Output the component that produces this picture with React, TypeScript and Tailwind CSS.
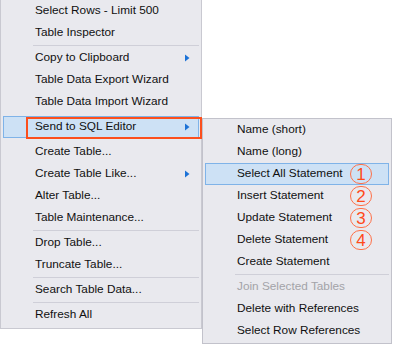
const FONT = { fontFamily: '"Liberation Sans", Arial, sans-serif' };

type Item =
  | { kind: 'sep'; hidden?: boolean }
  | { kind: 'item'; label: string; arrow?: boolean; active?: boolean; disabled?: boolean; mark?: string };

const mainItems: Item[] = [
  { kind: 'item', label: 'Select Rows - Limit 500' },
  { kind: 'item', label: 'Table Inspector' },
  { kind: 'sep' },
  { kind: 'item', label: 'Copy to Clipboard', arrow: true },
  { kind: 'item', label: 'Table Data Export Wizard' },
  { kind: 'item', label: 'Table Data Import Wizard' },
  { kind: 'sep', hidden: true },
  { kind: 'item', label: 'Send to SQL Editor', arrow: true, active: true },
  { kind: 'sep', hidden: true },
  { kind: 'item', label: 'Create Table...' },
  { kind: 'item', label: 'Create Table Like...', arrow: true },
  { kind: 'item', label: 'Alter Table...' },
  { kind: 'item', label: 'Table Maintenance...' },
  { kind: 'sep' },
  { kind: 'item', label: 'Drop Table...' },
  { kind: 'item', label: 'Truncate Table...' },
  { kind: 'sep' },
  { kind: 'item', label: 'Search Table Data...' },
  { kind: 'sep' },
  { kind: 'item', label: 'Refresh All' },
];

const subItems: Item[] = [
  { kind: 'item', label: 'Name (short)' },
  { kind: 'item', label: 'Name (long)' },
  { kind: 'item', label: 'Select All Statement', active: true, mark: '1' },
  { kind: 'item', label: 'Insert Statement', mark: '2' },
  { kind: 'item', label: 'Update Statement', mark: '3' },
  { kind: 'item', label: 'Delete Statement', mark: '4' },
  { kind: 'item', label: 'Create Statement' },
  { kind: 'sep' },
  { kind: 'item', label: 'Join Selected Tables', disabled: true },
  { kind: 'item', label: 'Delete with References' },
  { kind: 'item', label: 'Select Row References' },
];

function Arrow() {
  return (
    <svg width="5" height="8" viewBox="0 0 5 8" className="ml-auto mr-[8px]">
      <path d="M0 0.5 L4.5 4 L0 7.5 Z" fill="#1c72d6" />
    </svg>
  );
}

function MenuRows({ items }: { items: Item[] }) {
  return (
    <>
      {items.map((it, i) =>
        it.kind === 'sep' ? (
          <div key={i} className="h-[3px] flex items-center ml-[32px] mr-[2px]">
            {!it.hidden && <div className="h-px w-full bg-[#cfcfd8]" />}
          </div>
        ) : (
          <div
            key={i}
            className={
              'h-[22px] mx-[2px] pl-[31px] flex items-center border ' +
              (it.active ? 'border-[#7fb3e8] bg-[#cde1f5]' : 'border-transparent')
            }
          >
            <span className={it.disabled ? 'text-[#a3a3a8]' : 'text-[#101010]'}>{it.label}</span>
            {it.arrow && <Arrow />}
            {it.mark && (
              <span className="ml-auto mr-[16px] w-[22px] h-[20px] rounded-full border border-[#ff7048] flex items-center justify-center text-[#ff4a1a] text-[17px] leading-none font-normal">
                {it.mark}
              </span>
            )}
          </div>
        )
      )}
    </>
  );
}

export default function App() {
  return (
    <div className="relative w-[393px] h-[345px] bg-white overflow-hidden text-[11.8px]" style={FONT}>
      {/* Context menu */}
      <div className="w-[202px] bg-[#e9e9ee] border-l border-r border-b border-[#c9c9d1] pb-[2px]">
        <MenuRows items={mainItems} />
      </div>

      {/* Submenu flyout */}
      <div className="absolute left-[202px] top-[118px] w-[190px] bg-[#e9e9ee] border border-[#c2c2cb] pb-[1px]">
        <MenuRows items={subItems} />
      </div>

      {/* Annotation box */}
      <div className="absolute left-[26px] top-[117px] w-[176px] h-[22px] border-2 border-[#fb4f1d]" />
    </div>
  );
}
